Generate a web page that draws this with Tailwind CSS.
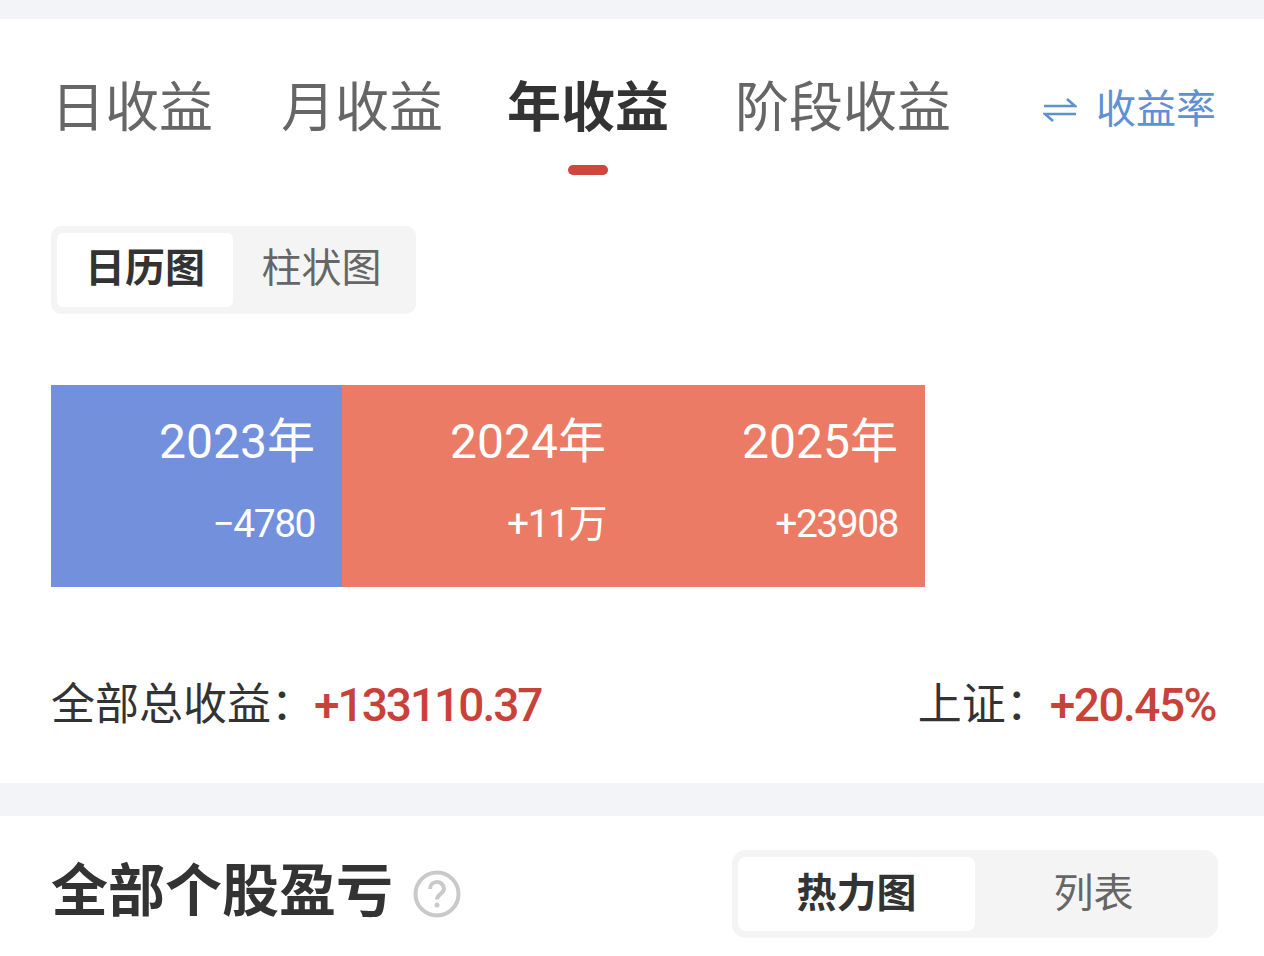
<!DOCTYPE html>
<html lang="zh-CN">
<head>
    <meta charset="UTF-8">
    <meta name="viewport" content="width=device-width, initial-scale=1.0">
    <title>收益</title>
    <script src="https://cdn.jsdelivr.net/npm/@tailwindcss/browser@4"></script>
</head>
<body class="bg-white font-['Roboto','Noto_Sans_CJK_SC',sans-serif] h-[956px] overflow-hidden">
    <div class="h-[19px] bg-[#f2f4f8]"></div>

    <!-- Period tabs -->
    <section class="h-[764px] pl-[51px] pr-[48px]">
        <div class="h-[151px] flex items-start">
            <div class="flex gap-[65px] pt-[54px] text-[54px] leading-[72px] text-[#666666]">
                <span class="mr-[3px]">日收益</span>
                <span>月收益</span>
                <span class="relative -ml-[1px] mr-[1px] font-bold text-[#333333]">年收益
                    <span class="absolute left-[61px] top-[92px] w-[40px] h-[10px] rounded-full bg-[#d0453d]"></span>
                </span>
                <span>阶段收益</span>
            </div>
            <div class="ml-auto flex items-center gap-[19px] pt-[64px] text-[#5f90d6] text-[40px] leading-[54px]">
                <svg width="34" height="26" viewBox="0 0 34 26" fill="none" stroke="#5f90d6" stroke-width="2.6">
                    <path d="M1 9H32L24 2"/>
                    <path d="M33 17H2L10 24"/>
                </svg>
                <span>收益率</span>
            </div>
        </div>

        <!-- Chart type toggle -->
        <div class="mt-[56px] w-[365px] h-[88px] rounded-[10px] bg-[#f4f4f4] p-[6px] pt-[7px] flex text-[40px]">
            <div class="w-[176px] h-[74px] rounded-[6px] bg-white flex items-center justify-center font-bold text-[#333333] pb-[2px]">日历图</div>
            <div class="flex-1 h-[74px] flex items-center justify-center text-[#666666] pb-[2px]">柱状图</div>
        </div>

        <!-- Year blocks -->
        <div class="mt-[71px] flex h-[202px] text-white text-right">
            <div class="w-[291px] bg-[#7290dc] pr-[27px] pt-[25px]">
                <div class="text-[48px] leading-[64px]">2023年</div>
                <div class="mt-[25px] text-[39px] leading-[50px] tracking-[-1.5px]">−4780</div>
            </div>
            <div class="w-[291px] bg-[#eb7b65] pr-[27px] pt-[25px]">
                <div class="text-[48px] leading-[64px]">2024年</div>
                <div class="mt-[25px] text-[39px] leading-[50px] tracking-[-1.5px]">+11万</div>
            </div>
            <div class="w-[292px] bg-[#eb7b65] pr-[27px] pt-[25px]">
                <div class="text-[48px] leading-[64px]">2025年</div>
                <div class="mt-[25px] text-[39px] leading-[50px] tracking-[-1.5px]">+23908</div>
            </div>
        </div>

        <!-- Totals -->
        <div class="mt-[88px] flex items-center justify-between text-[44px] leading-[60px] text-[#333333]">
            <div class="flex items-center">
                <span>全部总收益：</span>
                <span class="-ml-[1px] text-[46px] tracking-[-2px] text-[#c9423a] font-medium">+133110.37</span>
            </div>
            <div class="flex items-center">
                <span>上证：</span>
                <span class="text-[46px] tracking-[-1.5px] text-[#c9423a] font-medium">+20.45%</span>
            </div>
        </div>
    </section>

    <div class="h-[33px] bg-[#f2f4f8]"></div>

    <!-- Stock P&L header -->
    <section class="pl-[51px] pr-[46px] pt-[34px] flex items-start justify-between">
        <div class="flex items-center h-[88px] gap-[20px]">
            <h2 class="text-[57px] leading-[80px] font-bold text-[#333333] -mt-[4px]">全部个股盈亏</h2>
            <svg width="48" height="48" viewBox="0 0 48 48" fill="none" stroke="#c9c9c9">
                <circle cx="24" cy="24" r="21.5" stroke-width="4"/>
                <path d="M17 19c0-4 3-7 7-7s7 3 7 6.500c0 5-7 5.500-7 11" stroke-width="4"/>
                <circle cx="24" cy="35" r="2.500" fill="#c9c9c9" stroke="none"/>
            </svg>
        </div>
        <div class="w-[486px] h-[88px] rounded-[14px] bg-[#f4f4f4] p-[6px] pt-[7px] flex text-[40px]">
            <div class="w-[237px] h-[74px] rounded-[8px] bg-white flex items-center justify-center font-bold text-[#333333]">热力图</div>
            <div class="flex-1 h-[74px] flex items-center justify-center text-[#666666]">列表</div>
        </div>
    </section>
</body>
</html>
